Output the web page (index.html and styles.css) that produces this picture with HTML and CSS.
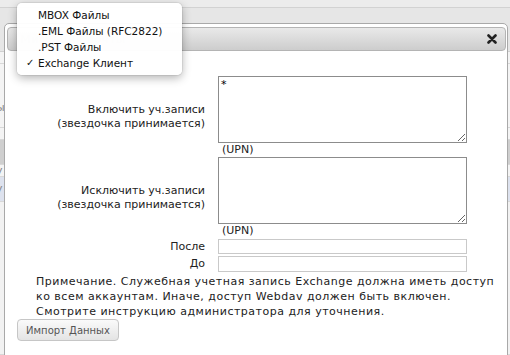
FILE: index.html
```html
<!DOCTYPE html>
<html>
  <head>
    <meta charset="utf-8">
    <link rel="stylesheet" href="styles.css">
  </head>
  <body>
    <div class="page">

      <div class="backdrop">
        <div class="bd-top"></div>
        <div class="bd-bar"></div>
        <div class="bd-row bd-light"></div>
        <div class="bd-row bd-tall"><span>ы</span></div>
        <div class="bd-row bd-mid"></div>
        <div class="bd-row bd-gray"></div>
        <div class="bd-row bd-mid"><span>у</span></div>
        <div class="bd-row bd-blue"><span>у</span></div>
        <div class="bd-row bd-rest"></div>
      </div>

      <div class="dialog">
        <div class="titlebar">
          <span class="title">Миграция почты</span>
          <span class="close">
            <svg width="10" height="10" viewBox="0 0 10 10">
              <path d="M1.5 1.5 L8.5 8.5 M8.5 1.5 L1.5 8.5" stroke="#222" stroke-width="2.6" stroke-linecap="round"/>
            </svg>
          </span>
        </div>

        <div class="body">
          <div class="row">
            <label class="lbl">Включить уч.записи<br>(звездочка принимается)</label>
            <div class="field">
              <textarea class="area">*</textarea>
              <div class="hint">(UPN)</div>
            </div>
          </div>

          <div class="row">
            <label class="lbl">Исключить уч.записи<br>(звездочка принимается)</label>
            <div class="field">
              <textarea class="area"></textarea>
              <div class="hint">(UPN)</div>
            </div>
          </div>

          <div class="row row-input">
            <label class="lbl">После</label>
            <input class="text" type="text">
          </div>

          <div class="row row-input row-last">
            <label class="lbl">До</label>
            <input class="text" type="text">
          </div>

          <p class="note">Примечание. Служебная учетная запись Exchange должна иметь доступ ко всем аккаунтам. Иначе, доступ Webdav должен быть включен. Смотрите инструкцию администратора для уточнения.</p>

          <button class="btn">Импорт Данных</button>
        </div>
      </div>

      <ul class="menu">
        <li>MBOX Файлы</li>
        <li>.EML Файлы (RFC2822)</li>
        <li>.PST Файлы</li>
        <li class="checked">Exchange Клиент</li>
      </ul>

    </div>
  </body>
</html>
```

FILE: styles.css
```css
* {box-sizing: border-box;}

body {
  margin: 0;
  font-family: "DejaVu Sans", Verdana, sans-serif;
  font-size: 11px;
  color: #222;
  background-color: #e6e6e6;
}

.page {
  position: relative;
  width: 510px;
  height: 355px;
  overflow: hidden;
}

/* the app behind the dialog, only a sliver shows on the left */
.backdrop {
  display: flex;
  flex-direction: column;
  height: 100%;
}

.bd-top {height: 8px; background-color: #ececec; border-bottom: 1px solid #d2d2d2;}
.bd-bar {height: 44px; background-color: #e6e6e6; border-bottom: 1px solid #d0d0d0;}
.bd-row {border-bottom: 1px solid #d8d8d8; background-color: #f4f4f4; color: #888; font-size: 11px; line-height: 12px;}
.bd-row span {display: inline-block; margin-left: -4px;}
.bd-light {height: 12px;}
.bd-tall {height: 64px; padding-top: 38px;}
.bd-mid {height: 12px;}
.bd-gray {height: 25px; background-color: #cfcfcf;}
.bd-blue {height: 25px; background-color: #dde2ee; padding-top: 6px;}
.bd-rest {flex: 1; background-color: #f2f2f2;}

.dialog {
  position: absolute;
  left: 4px;
  top: 23px;
  width: 504px;
  height: 360px;
  background-color: #fff;
  border: 1px solid #a9a9a9;
  border-radius: 5px;
  padding: 3px 1px 0 2px;
}

.titlebar {
  display: flex;
  align-items: center;
  justify-content: space-between;
  height: 24px;
  padding: 0 8px 0 12px;
  border: 1px solid #b4b4b4;
  border-radius: 4px;
  background: linear-gradient(#e9e9e9, #cdcdcd);
}

.title {
  color: #777;
  font-weight: bold;
  opacity: 0.25;
}

.close {
  display: flex;
}

.body {
  padding-top: 25px;
}

.row {
  display: grid;
  grid-template-columns: 198px 249px;
  column-gap: 13px;
  align-items: center;
}

.lbl {
  text-align: right;
  line-height: 14px;
  color: #222;
}

.field {
  display: flex;
  flex-direction: column;
}

.area {
  display: block;
  width: 249px;
  height: 67px;
  margin: 0;
  padding: 1px 2px;
  border: 1px solid #8c8c8c;
  font-family: "DejaVu Sans", Verdana, sans-serif;
  font-size: 11px;
  line-height: 13px;
  resize: both;
}

.hint {
  line-height: 14px;
  padding-left: 4px;
}

.row-input {
  margin-top: 1px;
}

.row-input + .row-input {
  margin-top: 2px;
}

.text {
  width: 249px;
  height: 15px;
  margin: 0;
  border: 1px solid #c9c9c9;
  padding: 0 2px;
}

.row-last .text {
  height: 16px;
}

.note {
  margin: 2px 0 0 29px;
  width: 462px;
  line-height: 15px;
  letter-spacing: 0.5px;
}

.btn {
  display: block;
  margin: 0 0 0 10px;
  width: 102px;
  height: 22px;
  border: 1px solid #c6c6c6;
  border-radius: 4px;
  background: linear-gradient(#fafafa, #e4e4e4);
  color: #555;
  font-family: "DejaVu Sans", Verdana, sans-serif;
  font-size: 10px;
  padding: 0;
}

/* native popup list of the format select */
.menu {
  position: absolute;
  left: 17px;
  top: 3px;
  width: 165px;
  height: 72px;
  margin: 0;
  padding: 4px 0;
  list-style: none;
  background-color: rgba(255, 255, 255, 0.97);
  border-radius: 5px;
  box-shadow: 0 3px 10px rgba(0, 0, 0, 0.3), 0 0 0 1px rgba(0, 0, 0, 0.06);
  font-family: "DejaVu Sans", sans-serif;
  font-size: 10.5px;
  color: #111;
}

.menu li {
  position: relative;
  line-height: 16px;
  padding-left: 21px;
}

.menu li.checked:before {
  content: "✓";
  position: absolute;
  left: 9px;
  font-size: 10px;
}
```
